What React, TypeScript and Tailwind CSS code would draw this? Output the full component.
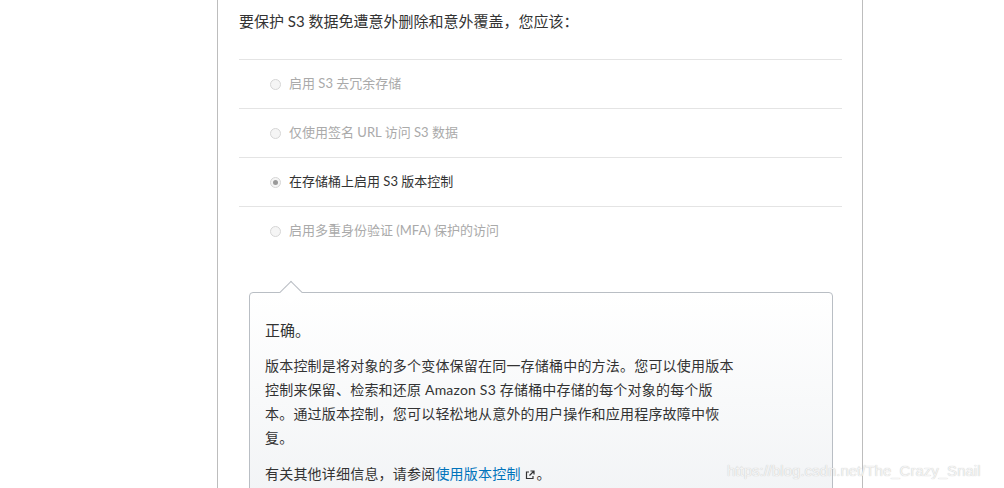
export default function App() {
  const opts = [
    { t: "启用 S3 去冗余存储", on: false },
    { t: "仅使用签名 URL 访问 S3 数据", on: false },
    { t: "在存储桶上启用 S3 版本控制", on: true },
    { t: "启用多重身份验证 (MFA) 保护的访问", on: false },
  ];
  return (
    <div className="relative w-[1004px] h-[488px] overflow-hidden bg-white" style={{ fontFamily: 'Lato, "Noto Sans CJK SC", sans-serif' }}>
      <div className="ml-[217px] w-[646px] h-[488px] border-l border-r border-[#bdbdbd] pl-[21px] pr-[20px]">
        <div className="pt-[10px] h-[59px] text-[15px] text-[#333]">要保护 S3 数据免遭意外删除和意外覆盖，您应该：</div>
        {opts.map((o, i) => (
          <div key={i} className="flex items-center h-[49px] border-t border-[#e4e4e4] pl-[31px]">
            <span className="w-[11px] h-[11px] rounded-full border border-[#d6d6d6] bg-[#f5f5f5] flex items-center justify-center mr-[8px]">
              {o.on && <span className="w-[5px] h-[5px] rounded-full bg-[#9a9a9a]" />}
            </span>
            <span className={`text-[13px] ${o.on ? "text-[#333]" : "text-[#aaa]"}`}>{o.t}</span>
          </div>
        ))}
        <div className="relative mt-[37px] ml-[10px] w-[584px] h-[220px] border border-[#b9bec4] rounded-[4px] bg-gradient-to-b from-white to-[#f1f3f5] px-[15px] pt-[25px] text-[15px] text-[#333] leading-[24px]">
          <div className="absolute -top-[9px] left-[33px] w-[16px] h-[16px] rotate-45 bg-white border-l border-t border-[#b9bec4]" />
          <p>正确。</p>
          <p className="mt-[12px] w-[476px] text-[14px] tracking-[0.2px]">版本控制是将对象的多个变体保留在同一存储桶中的方法。您可以使用版本控制来保留、检索和还原 Amazon S3 存储桶中存储的每个对象的每个版本。通过版本控制，您可以轻松地从意外的用户操作和应用程序故障中恢复。</p>
          <p className="mt-[12px] text-[14px] tracking-[0.2px]">有关其他详细信息，请参阅<span className="text-[#0073bb]">使用版本控制</span>
            <svg className="inline ml-[4px] mr-[2px]" width="10" height="10" viewBox="0 0 10 10" fill="none" stroke="#333" strokeWidth="1.2"><path d="M4 2H1.5v6.5H8V6M5.5 1H9v3.5M9 1 4.5 5.5"/></svg>
            。</p>
        </div>
      </div>
      <div className="absolute left-[727px] top-[460px] text-[15px] text-[#f4f4f4]" style={{ fontFamily: '"Liberation Sans", sans-serif', textShadow: "0 0 1px #bbb" }}>https://blog.csdn.net/The_Crazy_Snail</div>
    </div>
  );
}
